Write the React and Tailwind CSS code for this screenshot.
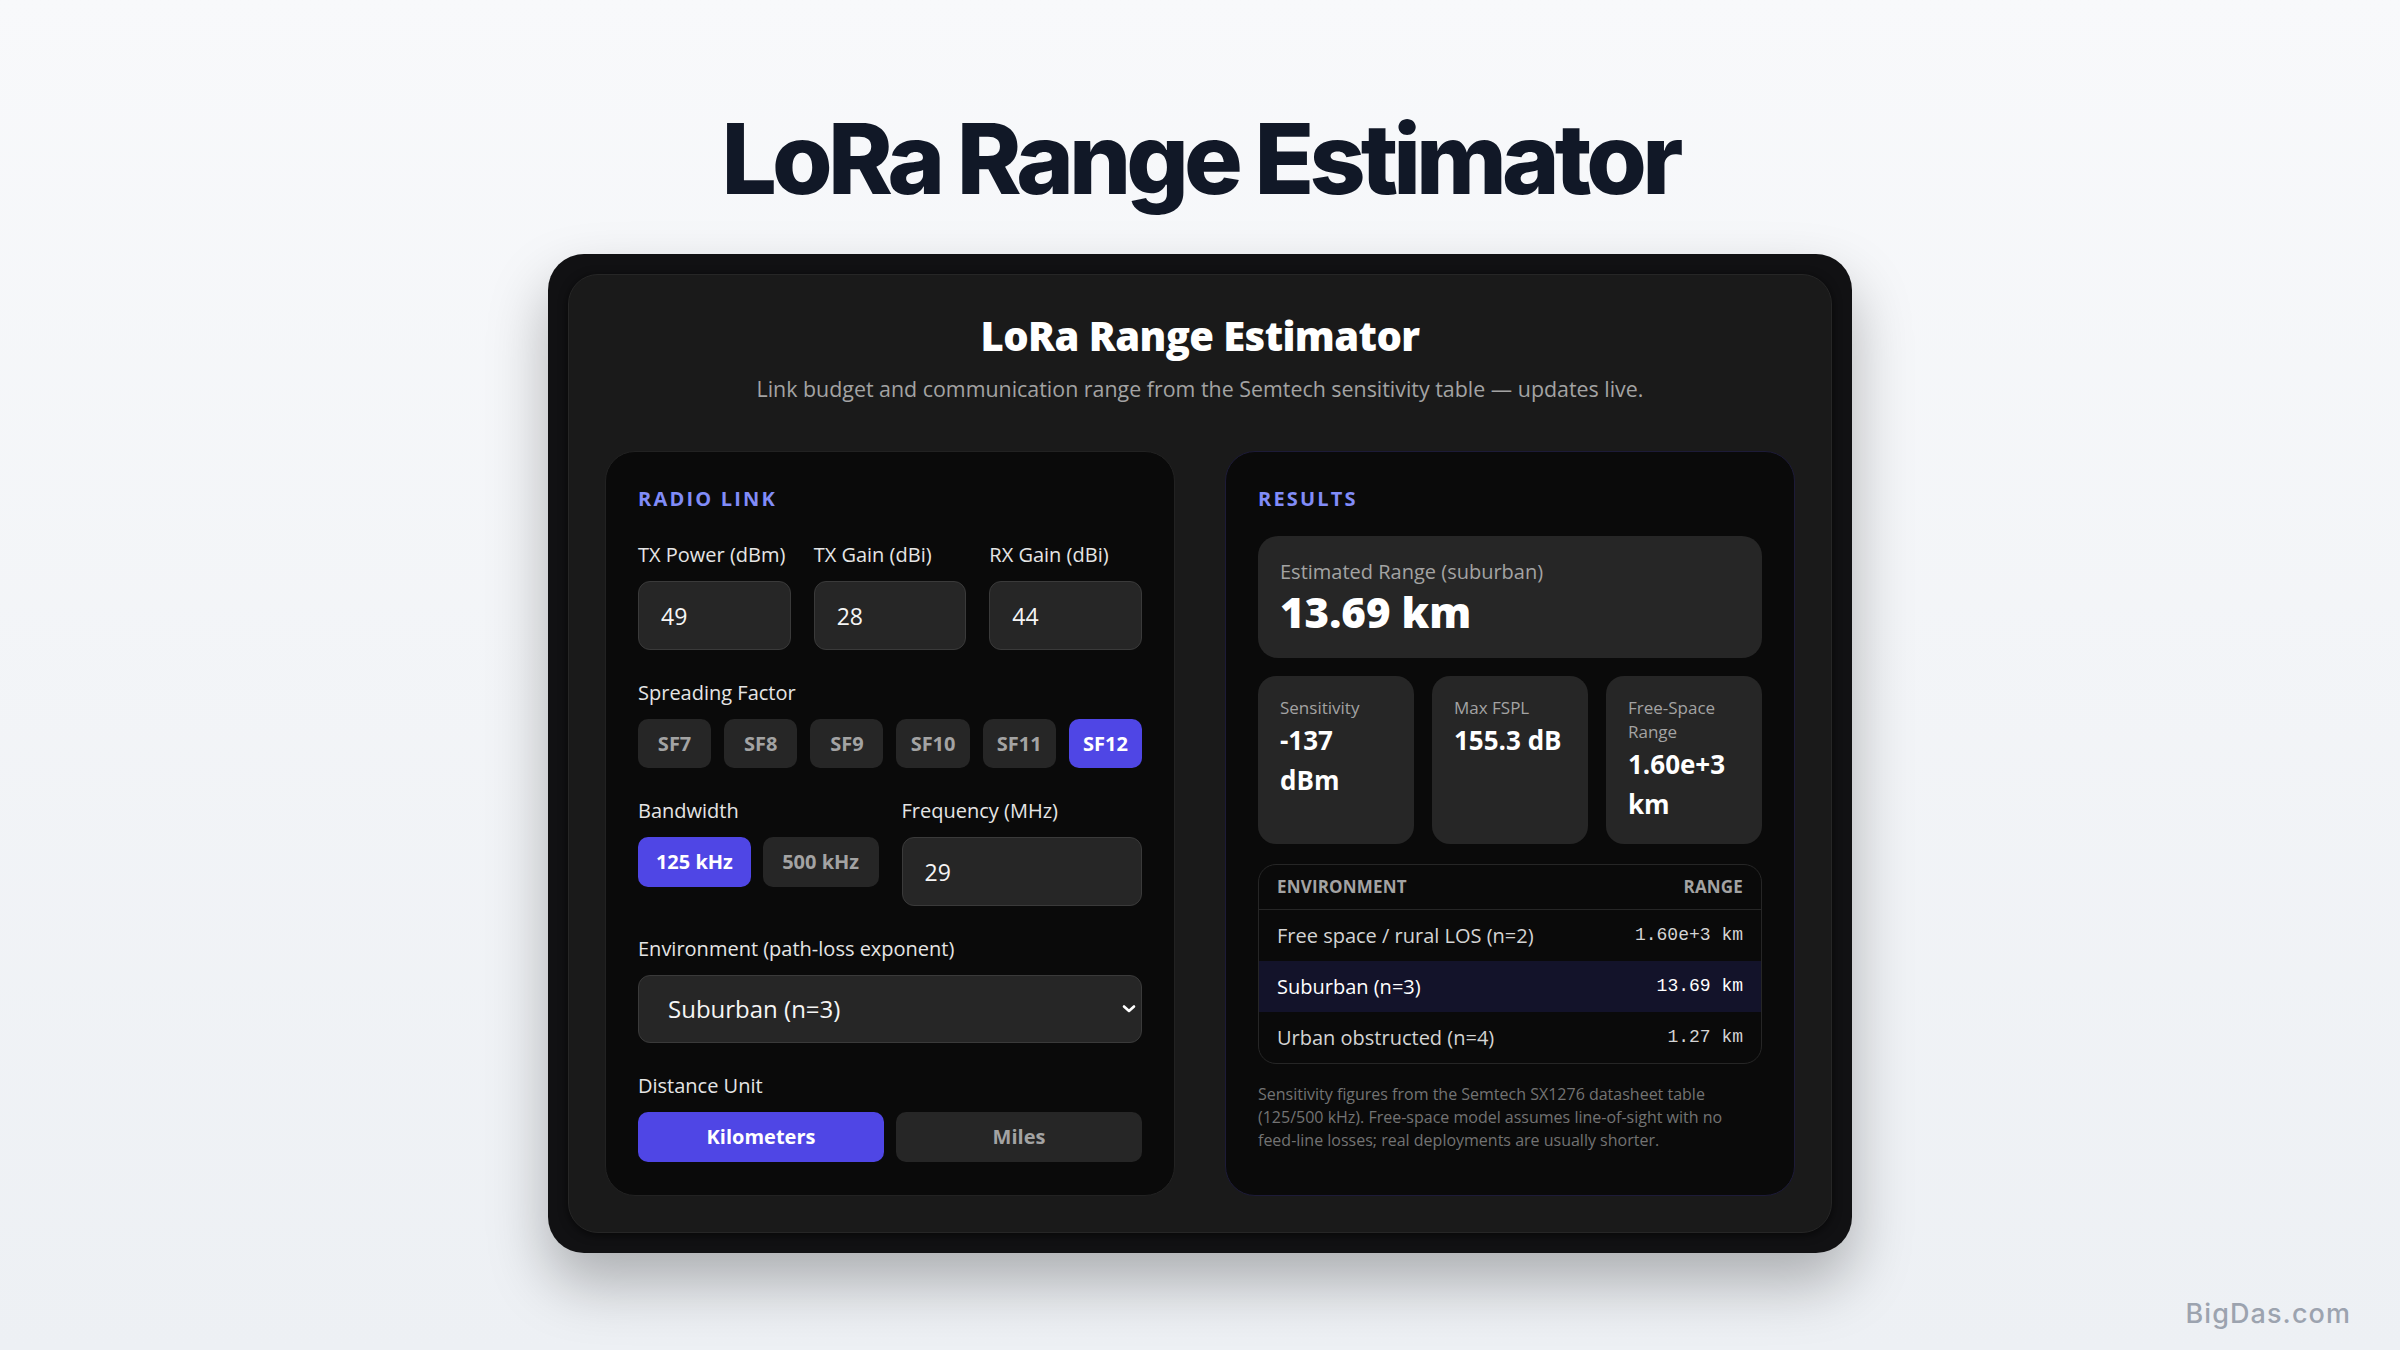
import { useState } from 'react';

const SF = ['SF7', 'SF8', 'SF9', 'SF10', 'SF11', 'SF12'];

const ENV_ROWS = [
  { name: 'Free space / rural LOS (n=2)', range: '1.60e+3 km' },
  { name: 'Suburban (n=3)', range: '13.69 km', active: true },
  { name: 'Urban obstructed (n=4)', range: '1.27 km' },
];

function Label({ children }) {
  return <div className="text-[20px] leading-[30px] font-medium text-[#e5e5e5] mb-[11px]">{children}</div>;
}

function NumInput({ value }) {
  return (
    <input
      type="text"
      defaultValue={value}
      className="w-full h-[69px] rounded-[12px] bg-[#262626] border border-[#3a3a3a] px-[22px] text-[23px] text-[#f5f5f5] outline-none"
    />
  );
}

function Pill({ active, children, onClick, className = '' }) {
  return (
    <button
      onClick={onClick}
      className={`h-[49px] rounded-[10px] text-[20px] font-bold ${active ? 'bg-[#4f46e5] text-white' : 'bg-[#262626] text-[#a3a3a3]'} ${className}`}
    >
      {children}
    </button>
  );
}

function Stat({ label, value }) {
  return (
    <div className="rounded-[18px] bg-[#262626] px-[22px] pt-[20px] pb-[20px]">
      <div className="text-[17px] leading-[24px] text-[#a3a3a3]">{label}</div>
      <div className="text-[26px] leading-[40px] font-bold text-white">{value}</div>
    </div>
  );
}

export default function App() {
  const [sf, setSf] = useState('SF12');
  const [bw, setBw] = useState('125');
  const [unit, setUnit] = useState('km');

  return (
    <div
      className="relative min-h-screen w-full bg-gradient-to-b from-[#f8f9fb] to-[#edf0f4] flex flex-col items-center"
      style={{ fontFamily: '"Open Sans", "Noto Sans", sans-serif' }}
    >
      <h1
        className="mt-[109px] text-[98px] leading-[100px] font-extrabold tracking-[-0.05em] text-[#111827]"
        style={{ fontFamily: 'Inter, sans-serif' }}
      >
        LoRa Range Estimator
      </h1>

      <div className="mt-[45px] w-[1304px] rounded-[36px] bg-[#111113] p-[20px] shadow-[0_30px_60px_rgba(0,0,0,0.28)]">
        <div className="rounded-[30px] bg-[#1a1a1a] border border-[#262626] shadow-[0_2px_10px_rgba(0,0,0,0.6)] px-[36px] pt-[36px] pb-[36px]">
          {/* header */}
          <div className="text-center">
            <h2 className="text-[40px] leading-[50px] font-extrabold tracking-[-0.015em] text-white">LoRa Range Estimator</h2>
            <p className="mt-[11px] text-[21.4px] leading-[33px] text-[#a3a3a3]">
              Link budget and communication range from the Semtech sensitivity table — updates live.
            </p>
          </div>

          <div className="mt-[46px] grid grid-cols-2 gap-[50px]">
            {/* Radio link */}
            <div className="rounded-[30px] bg-[#0a0a0a] border border-[#222222] px-[32px] pt-[32px] pb-[33px]">
              <div className="text-[20px] leading-[30px] font-bold tracking-[0.11em] text-[#818cf8] mb-[26px]">RADIO LINK</div>

              <div className="grid grid-cols-3 gap-[23px]">
                <div>
                  <Label>TX Power (dBm)</Label>
                  <NumInput value="49" />
                </div>
                <div>
                  <Label>TX Gain (dBi)</Label>
                  <NumInput value="28" />
                </div>
                <div>
                  <Label>RX Gain (dBi)</Label>
                  <NumInput value="44" />
                </div>
              </div>

              <div className="mt-[28px]">
                <Label>Spreading Factor</Label>
                <div className="grid grid-cols-6 gap-[13px]">
                  {SF.map((s) => (
                    <Pill key={s} active={sf === s} onClick={() => setSf(s)}>{s}</Pill>
                  ))}
                </div>
              </div>

              <div className="mt-[28px] grid grid-cols-2 gap-[23px]">
                <div>
                  <Label>Bandwidth</Label>
                  <div className="flex gap-[12px]">
                    <Pill active={bw === '125'} onClick={() => setBw('125')} className="w-[113px] h-[50px]">125 kHz</Pill>
                    <Pill active={bw === '500'} onClick={() => setBw('500')} className="w-[116px] h-[50px]">500 kHz</Pill>
                  </div>
                </div>
                <div>
                  <Label>Frequency (MHz)</Label>
                  <NumInput value="29" />
                </div>
              </div>

              <div className="mt-[28px]">
                <Label>Environment (path-loss exponent)</Label>
                <div className="relative">
                  <select
                    defaultValue="3"
                    className="w-full h-[68px] appearance-none rounded-[12px] bg-[#262626] border border-[#3a3a3a] pl-[29px] pr-[40px] text-[24px] text-[#f5f5f5] outline-none"
                  >
                    <option value="2">Free space / rural LOS (n=2)</option>
                    <option value="3">Suburban (n=3)</option>
                    <option value="4">Urban obstructed (n=4)</option>
                  </select>
                  <svg className="pointer-events-none absolute right-[6px] top-1/2 -translate-y-1/2" width="14" height="10" viewBox="0 0 14 10">
                    <path d="M2 2.5 L7 7 L12 2.5" fill="none" stroke="#fff" strokeWidth="2.6" strokeLinecap="round" strokeLinejoin="round" />
                  </svg>
                </div>
              </div>

              <div className="mt-[28px]">
                <Label>Distance Unit</Label>
                <div className="grid grid-cols-2 gap-[12px]">
                  <Pill active={unit === 'km'} onClick={() => setUnit('km')} className="h-[50px]">Kilometers</Pill>
                  <Pill active={unit === 'mi'} onClick={() => setUnit('mi')} className="h-[50px]">Miles</Pill>
                </div>
              </div>
            </div>

            {/* Results */}
            <div className="rounded-[30px] bg-[#0a0a0a] border border-[#1d1b38] px-[32px] pt-[32px] pb-[33px]">
              <div className="text-[20px] leading-[30px] font-bold tracking-[0.11em] text-[#818cf8] mb-[22px]">RESULTS</div>

              <div className="rounded-[20px] bg-[#262626] px-[22px] pt-[21px] pb-[21px]">
                <div className="text-[20px] leading-[30px] text-[#a3a3a3]">Estimated Range (suburban)</div>
                <div className="text-[42px] leading-[50px] font-extrabold text-white">13.69 km</div>
              </div>

              <div className="mt-[18px] grid grid-cols-3 gap-[18px]">
                <Stat label="Sensitivity" value="-137 dBm" />
                <Stat label="Max FSPL" value="155.3 dB" />
                <Stat label="Free-Space Range" value="1.60e+3 km" />
              </div>

              <div className="mt-[20px] rounded-[18px] border border-[#262626] overflow-hidden">
                <div className="flex justify-between items-center h-[45px] px-[18px] border-b border-[#262626] text-[17px] font-bold tracking-[0.01em] text-[#a3a3a3]">
                  <span>ENVIRONMENT</span>
                  <span>RANGE</span>
                </div>
                {ENV_ROWS.map((r) => (
                  <div
                    key={r.name}
                    className={`flex justify-between items-center h-[51px] px-[18px] ${r.active ? 'bg-[#13132a] text-white' : 'text-[#d4d4d4]'}`}
                  >
                    <span className="text-[20px]">{r.name}</span>
                    <span className="text-[18px]" style={{ fontFamily: '"Liberation Mono", monospace' }}>{r.range}</span>
                  </div>
                ))}
              </div>

              <p className="mt-[19px] text-[16px] leading-[23px] text-[#737373]">
                Sensitivity figures from the Semtech SX1276 datasheet table (125/500 kHz). Free-space model assumes line-of-sight with no feed-line losses; real deployments are usually shorter.
              </p>
            </div>
          </div>
        </div>
      </div>

      <div
        className="absolute right-[49px] bottom-[16px] text-[27px] font-medium tracking-[0.04em] text-[#9ca3af]"
        style={{ fontFamily: 'Inter, sans-serif' }}
      >
        BigDas.com
      </div>
    </div>
  );
}
